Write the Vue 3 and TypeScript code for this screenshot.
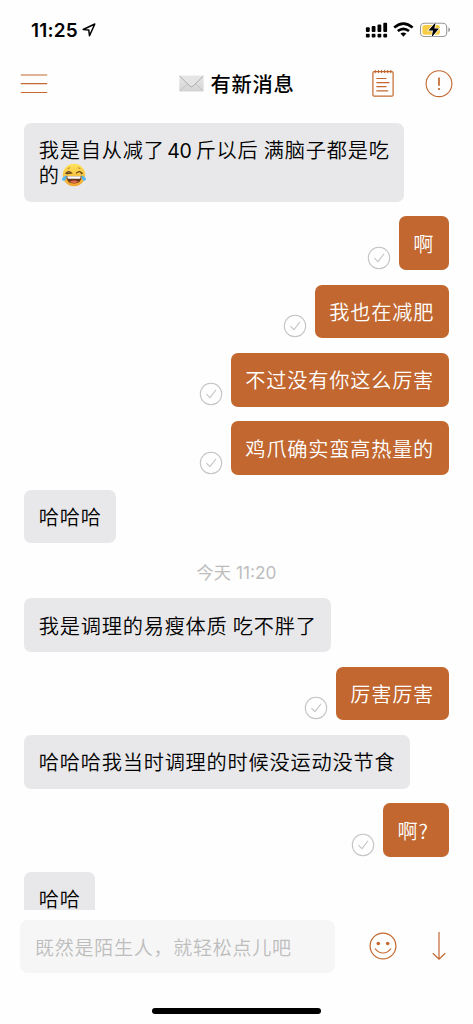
<script setup lang="ts">
interface Entry {
  kind: 'in' | 'out' | 'time'
  text: string
}

const entries: Entry[] = [
  { kind: 'out', text: '啊' },
  { kind: 'out', text: '我也在减肥' },
  { kind: 'out', text: '不过没有你这么厉害' },
  { kind: 'out', text: '鸡爪确实蛮高热量的' },
  { kind: 'in', text: '哈哈哈' },
  { kind: 'time', text: '今天 11:20' },
  { kind: 'in', text: '我是调理的易瘦体质 吃不胖了' },
  { kind: 'out', text: '厉害厉害' },
  { kind: 'in', text: '哈哈哈我当时调理的时候没运动没节食' },
  { kind: 'out', text: '啊? ' },
  { kind: 'in', text: '哈哈' },
]
</script>

<template>
  <main class="phone">
    <header class="status">
      <div class="clock">
        <span>11:25</span>
        <svg width="14" height="14" viewBox="0 0 14 14">
          <path d="M1.2 6.5 12.8 1 7.5 12.8 6.8 7.1Z" fill="none" stroke="#000" stroke-width="1.5" stroke-linejoin="round" />
        </svg>
      </div>
      <svg class="indicators" width="88" height="18" viewBox="0 0 88 18">
        <g fill="#000">
          <rect x=".9" y="6.2" width="3.8" height="4.8" rx="1" />
          <rect x="6.7" y="5" width="3.8" height="6" rx="1" />
          <rect x="12.5" y="3.4" width="3.8" height="7.6" rx="1" />
          <rect x="18.3" y="1.7" width="3.8" height="9.3" rx="1" />
          <rect v-for="x in [0.9, 6.7, 12.5, 18.3]" :key="x" :x="x" y="12.7" width="3.8" height="3.8" rx="1" />
        </g>
        <g fill="none" stroke="#000" stroke-width="2.6">
          <path d="M29.2 6.5Q38.4-1.3 47.6 6.5" />
          <path d="M32.8 10.1Q38.4 5.5 44 10.1" />
        </g>
        <path d="M35.5 12.6Q38.4 10.6 41.3 12.6L38.4 15.7Z" fill="#000" />
        <rect x="55.5" y="2.3" width="26.2" height="13.2" rx="3.8" fill="#fff" stroke="#999" stroke-width="1.1" />
        <rect x="57.4" y="4.1" width="17.5" height="9.7" rx="2.2" fill="#f7cd45" />
        <path d="M83.3 6.5Q85.1 7 85.1 8.8T83.3 11.1Z" fill="#999" />
        <path d="M70.7 1.3 63.5 9.6H68L66.5 16.4 73.9 7.6H69.3Z" fill="#000" stroke="#fff" stroke-width="1.4" paint-order="stroke" />
      </svg>
    </header>

    <nav class="bar">
      <svg class="menu" width="28" height="22" viewBox="0 0 28 22">
        <path d="M.8 2H27.2M.8 10.7H27.2M.8 19.5H27.2" stroke="#c4682f" stroke-width="1.2" />
      </svg>
      <div class="title">
        <svg width="25" height="17" viewBox="0 0 25 17">
          <defs>
            <linearGradient id="paper" x2="0" y2="1">
              <stop stop-color="#e9e9e9" />
              <stop offset="1" stop-color="#d3d3d3" />
            </linearGradient>
          </defs>
          <rect x=".3" y=".5" width="24.3" height="16" rx=".8" fill="url(#paper)" />
          <path d="M1 15.8 9 8.5M24 15.8 16 8.5" stroke="#b9b9b9" stroke-width=".7" />
          <path d="M.7 1.2 10.8 11Q12.5 12.6 14.2 11L24.3 1.2" fill="#e4e4e4" stroke="#9d9d9d" stroke-width=".8" />
        </svg>
        <h1>有新消息</h1>
      </div>
      <div class="actions">
        <svg width="24" height="29" viewBox="0 0 24 29" fill="none" stroke="#c4682f" stroke-width="1.2">
          <rect x="1.9" y="2.7" width="20.2" height="24.4" rx="1.2" />
          <path d="M4.3 .9V4.2M7.4 .9V4.2M10.5 .9V4.2M13.6 .9V4.2M16.7 .9V4.2M19.8 .9V4.2" stroke-width="1" />
          <path d="M5.4 9.5H15.5M5.4 13.7H18.5M5.4 17.7H15.5M5.4 21.9H17.2" />
        </svg>
        <svg width="28" height="28" viewBox="0 0 28 28" fill="none" stroke="#c4682f">
          <circle cx="14" cy="13.7" r="12.9" stroke-width="1.1" />
          <path d="M14 7.4V15.7M14 18V20" stroke-width="1.7" />
        </svg>
      </div>
    </nav>

    <section class="chat">
      <div class="row in">
        <p class="bubble">我是自从减了<span class="num">40</span>斤以后 满脑子都是吃<br />的<svg class="joy" width="26" height="24" viewBox="0 0 26 24">
          <defs>
            <linearGradient id="face" x2="0" y2="1">
              <stop stop-color="#ffe45c" />
              <stop offset="1" stop-color="#f3a52d" />
            </linearGradient>
          </defs>
          <circle cx="13" cy="12" r="11.2" fill="url(#face)" />
          <path d="M4.8 10.3Q7.7 7 10.6 10.1L5.8 10.6M15.4 10.1Q18.3 7 21.2 10.3L20.2 10.6" fill="none" stroke="#684017" stroke-width="1.1" stroke-linecap="round" />
          <path d="M6.6 5.7 9 4.6M17 4.6 19.4 5.7" stroke="#bc7d22" stroke-width="1" />
          <path d="M5.2 13H20.8Q20.4 20.4 13 20.5 5.6 20.4 5.2 13Z" fill="#673619" />
          <path d="M6.2 13.3H19.8L19.1 15.8H6.9Z" fill="#fff" />
          <path d="M8.6 18.8Q13 16.3 17.4 18.8 13 21.2 8.6 18.8Z" fill="#e86b50" />
          <path d="M5.6 12.3Q5.4 18 2.7 17.8.2 17.1 1.4 14.9 2.3 13.4 5.6 12.3ZM20.4 12.3Q20.6 18 23.3 17.8 25.8 17.1 24.6 14.9 23.7 13.4 20.4 12.3Z" fill="#58b7ef" />
        </svg></p>
      </div>
      <div v-for="(e, i) in entries" :key="i" class="row" :class="e.kind">
        <time v-if="e.kind === 'time'">{{ e.text }}</time>
        <template v-else>
          <svg v-if="e.kind === 'out'" class="tick" width="24" height="24" viewBox="0 0 24 24" fill="none" stroke="#c3c3c3">
            <circle cx="12" cy="12" r="10.7" stroke-width="1.05" />
            <path d="M7.4 12.1 11 15.6 17 7.7" stroke-width="1.05" />
          </svg>
          <p class="bubble">{{ e.text }}</p>
        </template>
      </div>
    </section>

    <footer class="composer">
      <div class="field">既然是陌生人，就轻松点儿吧</div>
      <svg class="smile" width="28" height="28" viewBox="0 0 28 28" fill="none" stroke="#c4682f" stroke-width="1.2">
        <circle cx="14" cy="14" r="12.9" />
        <circle cx="9.3" cy="11.5" r="1.8" fill="#c4682f" stroke="none" />
        <circle cx="18.7" cy="11.5" r="1.8" fill="#c4682f" stroke="none" />
        <path d="M6 16.5Q9.2 21 14 21T22 16.5" />
      </svg>
      <svg class="down" width="14" height="30" viewBox="0 0 14 30" fill="none" stroke="#c4682f" stroke-width="1.2">
        <path d="M7 1V28M.8 22.2 7 28.2 13.2 22.2" />
      </svg>
    </footer>
    <div class="home"><i></i></div>
  </main>
</template>

<style>
body {
  margin: 0;
  background: #fefefe;
}
</style>

<style scoped>
.phone {
  width: 473px;
  height: 1024px;
  display: flex;
  flex-direction: column;
  overflow: hidden;
  background: #fefefe;
  color: #000;
  font-family: Inter, "Noto Sans CJK SC", sans-serif;
}
svg {
  display: block;
  flex: none;
}
.status {
  height: 60px;
  box-sizing: border-box;
  flex: none;
  display: flex;
  justify-content: space-between;
  padding: 20px 20px 0 31px;
}
.clock {
  display: flex;
  height: 20px;
  line-height: 21px;
  gap: 4px;
  font-size: 19px;
  font-weight: 600;
  letter-spacing: 0.2px;
}
.clock svg {
  margin-top: 3px;
}
.indicators {
  margin-top: 1px;
}
.bar {
  height: 47px;
  flex: none;
  display: grid;
  grid-template-columns: 1fr auto 1fr;
  align-items: center;
  padding: 0 20px;
}
.title {
  display: flex;
  align-items: center;
  gap: 7px;
}
.title h1 {
  margin: 0;
  padding-top: 2px;
  font-size: 20.3px;
  font-weight: 500;
  letter-spacing: 0.7px;
  line-height: 28px;
}
.actions {
  display: flex;
  align-items: center;
  justify-content: flex-end;
  gap: 30px;
}
.chat {
  height: 803px;
  box-sizing: border-box;
  flex: none;
  overflow: hidden;
  padding: 15.9px 24.3px 0 24.2px;
  display: flex;
  flex-direction: column;
  gap: 14.7px;
}
.row {
  display: flex;
  flex: none;
  align-items: flex-end;
}
.row.out {
  justify-content: flex-end;
}
.row.time {
  height: 25.7px;
  justify-content: center;
  align-items: center;
}
time {
  padding-top: 4px;
  color: #bdbdbd;
  font-size: 17.3px;
  line-height: 26px;
}
.bubble {
  margin: 0;
  padding: 15.3px 14.6px 13.75px;
  border-radius: 7px;
  background: #e8e8ea;
  font-family: "Noto Sans CJK SC", sans-serif;
  font-size: 20.2px;
  font-weight: 350;
  line-height: 24.6px;
  letter-spacing: 0.79px;
  white-space: pre;
}
.out .bubble {
  background: #c1672f;
  color: #fff;
}
.num {
  font-family: Inter, sans-serif;
  font-weight: 400;
  font-size: 19.5px;
  line-height: 20px;
  letter-spacing: -0.4px;
  margin: 0 4.2px 0 2.7px;
}
.joy {
  display: inline-block;
  vertical-align: -5px;
  margin: -6px 0 -4px 0.8px;
  transform: translateY(-5px);
}
.tick {
  margin: 0 7.7px 0.2px 0;
}
.composer {
  height: 73px;
  box-sizing: border-box;
  flex: none;
  display: flex;
  align-items: center;
  padding: 0 20px;
}
.field {
  width: 315px;
  height: 53px;
  box-sizing: border-box;
  padding-left: 15px;
  border-radius: 8px;
  background: #f6f6f6;
  color: #bdbdbd;
  font-family: "Noto Sans CJK SC", sans-serif;
  font-size: 19px;
  font-weight: 350;
  letter-spacing: 0.76px;
  line-height: 53px;
}
.smile {
  margin: 0 0 1px 34px;
}
.down {
  margin: 0 0 2px 35px;
}
.home {
  flex: 1;
  display: flex;
  justify-content: center;
  padding-top: 25px;
}
.home i {
  width: 169px;
  height: 6px;
  border-radius: 3px;
  background: #000;
}
</style>
